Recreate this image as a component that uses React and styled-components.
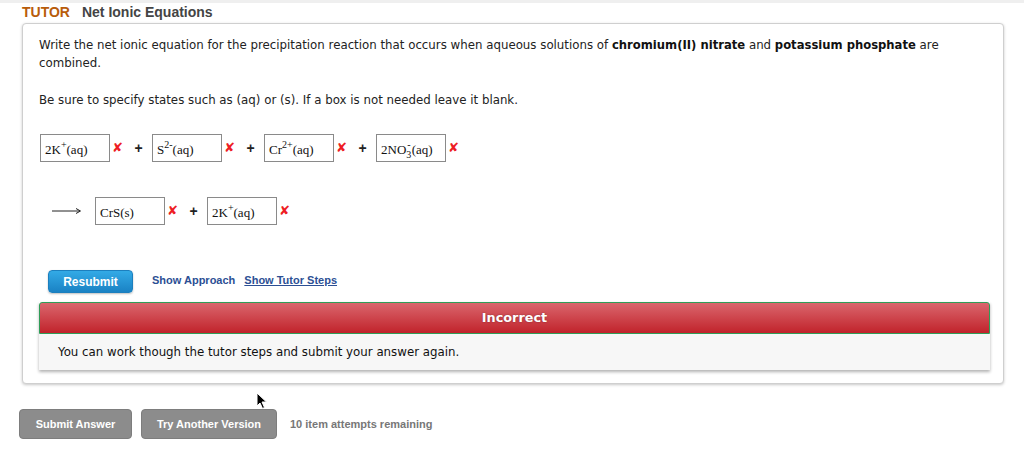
import React from "react";
import styled, { createGlobalStyle } from "styled-components";

const Global = createGlobalStyle`
  html, body { margin: 0; padding: 0; background: #fff; }
  body { font-family: "DejaVu Sans", Verdana, sans-serif; color: #222; }
`;

const Page = styled.div`
  position: relative;
  width: 1024px;
  height: 461px;
  overflow: hidden;
  border-top: 3px solid #efefef;
  box-sizing: border-box;
`;

const Title = styled.div`
  margin: 0 0 0 22px;
  height: 20px;
  font-family: "Liberation Sans", Arial, sans-serif;
  font-weight: bold;
  font-size: 14px;
  line-height: 19px;
  color: #444;
`;

const Brand = styled.span`
  color: #b85c0a;
  margin-right: 12px;
`;

const Card = styled.div`
  margin-left: 22px;
  width: 982px;
  box-sizing: border-box;
  border: 1px solid #cfcfcf;
  border-radius: 4px;
  box-shadow: 0 1px 3px rgba(0, 0, 0, 0.22);
  padding: 12px 13px 13px 16px;
  background: #fff;
`;

const Para = styled.p`
  margin: ${(p) => p.$mt || 0}px 0 0;
  font-size: 11.8px;
  line-height: 18px;
  color: #222;
`;

const Strong = styled.b`
  font-weight: bold;
  font-size: 11.6px;
  line-height: 1;
  color: #111;
`;

const EqRow = styled.div`
  display: flex;
  align-items: center;
  margin-top: ${(p) => p.$mt}px;
  padding-left: ${(p) => p.$pl || 1}px;
`;

const Box = styled.div`
  width: 70px;
  height: 28px;
  box-sizing: border-box;
  border: 1px solid #8a8a8a;
  font-family: "Liberation Serif", "Times New Roman", serif;
  font-size: 13px;
  color: #111;
  padding: 8px 0 0 4px;
  line-height: 14px;
  white-space: nowrap;
`;

const Sup = styled.sup`
  font-size: 10px;
  vertical-align: 6px;
  line-height: 0;
`;

const Sub = styled.sub`
  font-size: 10px;
  vertical-align: -4px;
  line-height: 0;
`;

const SupOver = styled.sup`
  font-size: 10px;
  vertical-align: 6px;
  line-height: 0;
  margin-left: -4px;
  margin-right: 1px;
`;

const Mark = styled.span`
  margin-left: 2px;
  width: 10px;
  color: #ee1c24;
  font-family: "DejaVu Sans", sans-serif;
  font-weight: bold;
  font-size: 13px;
  line-height: 14px;
`;

const Plus = styled.span`
  width: 19px;
  margin: 0 4px 0 7px;
  text-align: center;
  font-family: "Liberation Sans", Arial, sans-serif;
  font-weight: bold;
  font-size: 14px;
  color: #222;
`;

const Arrow = styled.svg`
  width: 30px;
  height: 8px;
  margin-right: 13px;
`;

const Actions = styled.div`
  display: flex;
  align-items: center;
  margin-top: 43px;
  padding-left: 9px;
  gap: 19px;
`;

const BlueButton = styled.button`
  width: 85px;
  height: 23px;
  border: 1px solid #1c7fbe;
  border-radius: 4px;
  background: linear-gradient(#33aae6, #1a82c4);
  box-shadow: 0 1px 2px rgba(0, 0, 0, 0.25);
  color: #fff;
  font-family: "Liberation Sans", Arial, sans-serif;
  font-weight: bold;
  font-size: 12px;
  padding: 0;
  margin-top: 2px;
`;

const Links = styled.div`
  display: flex;
  gap: 9px;
  margin-top: -2px;
`;

const Link = styled.a`
  font-family: "Liberation Sans", Arial, sans-serif;
  font-weight: bold;
  font-size: 11px;
  color: #2c4f94;
  text-decoration: ${(p) => (p.$underline ? "underline" : "none")};
`;

const Feedback = styled.div`
  margin-top: 9px;
  width: 951px;
  box-shadow: 0 2px 3px rgba(0, 0, 0, 0.3);
`;

const FeedbackHead = styled.div`
  height: 32px;
  box-sizing: border-box;
  border: 1px solid #2f9d58;
  border-radius: 3px 3px 0 0;
  background: linear-gradient(#da666d, #c1232b);
  color: #fff;
  text-align: center;
  font-family: "DejaVu Sans", Verdana, sans-serif;
  font-weight: bold;
  font-size: 12.8px;
  line-height: 30px;
  text-shadow: 0 0 2px rgba(0, 0, 0, 0.35);
`;

const FeedbackBody = styled.div`
  height: 36px;
  background: #f7f7f7;
  padding-left: 19px;
  font-size: 11.8px;
  line-height: 36px;
  color: #111;
`;

const Bottom = styled.div`
  display: flex;
  align-items: center;
  margin: 25px 0 0 19px;
  gap: 9px;
`;

const GrayButton = styled.button`
  width: ${(p) => p.$w}px;
  height: 30px;
  border: 1px solid #7d7d7d;
  border-radius: 4px;
  background: #8c8c8c;
  color: #fff;
  font-family: "Liberation Sans", Arial, sans-serif;
  font-weight: bold;
  font-size: 11px;
  padding: 0;
`;

const Attempts = styled.span`
  margin-left: 4px;
  font-family: "Liberation Sans", Arial, sans-serif;
  font-weight: bold;
  font-size: 11px;
  color: #777;
`;

const Cursor = styled.svg`
  position: absolute;
  left: 256px;
  top: 389px;
  width: 12px;
  height: 18px;
`;

function Term({ children }) {
  return (
    <>
      <Box>{children}</Box>
      <Mark>✘</Mark>
    </>
  );
}

export default function App() {
  return (
    <Page>
      <Global />
      <Title>
        <Brand>TUTOR</Brand>Net Ionic Equations
      </Title>
      <Card>
        <Para>
          Write the net ionic equation for the precipitation reaction that occurs when aqueous solutions of{" "}
          <Strong>chromium(II) nitrate</Strong> and <Strong>potassium phosphate</Strong> are combined.
        </Para>
        <Para $mt={19}>
          Be sure to specify states such as (aq) or (s). If a box is not needed leave it blank.
        </Para>
        <EqRow $mt={25}>
          <Term>
            2K<Sup>+</Sup>(aq)
          </Term>
          <Plus>+</Plus>
          <Term>
            S<Sup>2-</Sup>(aq)
          </Term>
          <Plus>+</Plus>
          <Term>
            Cr<Sup>2+</Sup>(aq)
          </Term>
          <Plus>+</Plus>
          <Term>
            2NO<Sub>3</Sub>
            <SupOver>-</SupOver>(aq)
          </Term>
        </EqRow>
        <EqRow $mt={35} $pl={13}>
          <Arrow viewBox="0 0 30 8">
            <line x1="0" y1="4" x2="28" y2="4" stroke="#222" strokeWidth="1" />
            <path d="M24 1.5 L28.5 4 L24 6.5" fill="none" stroke="#222" strokeWidth="1" />
          </Arrow>
          <Term>CrS(s)</Term>
          <Plus>+</Plus>
          <Term>
            2K<Sup>+</Sup>(aq)
          </Term>
        </EqRow>
        <Actions>
          <BlueButton>Resubmit</BlueButton>
          <Links>
            <Link>Show Approach</Link>
            <Link $underline>Show Tutor Steps</Link>
          </Links>
        </Actions>
        <Feedback>
          <FeedbackHead>Incorrect</FeedbackHead>
          <FeedbackBody>You can work though the tutor steps and submit your answer again.</FeedbackBody>
        </Feedback>
      </Card>
      <Bottom>
        <GrayButton $w={113}>Submit Answer</GrayButton>
        <GrayButton $w={136}>Try Another Version</GrayButton>
        <Attempts>10 item attempts remaining</Attempts>
      </Bottom>
      <Cursor viewBox="0 0 12 18">
        <path d="M1 1 L1 14 L4 11 L6.5 16.5 L8.5 15.5 L6 10 L10.5 10 Z" fill="#000" stroke="#fff" strokeWidth="1" />
      </Cursor>
    </Page>
  );
}
